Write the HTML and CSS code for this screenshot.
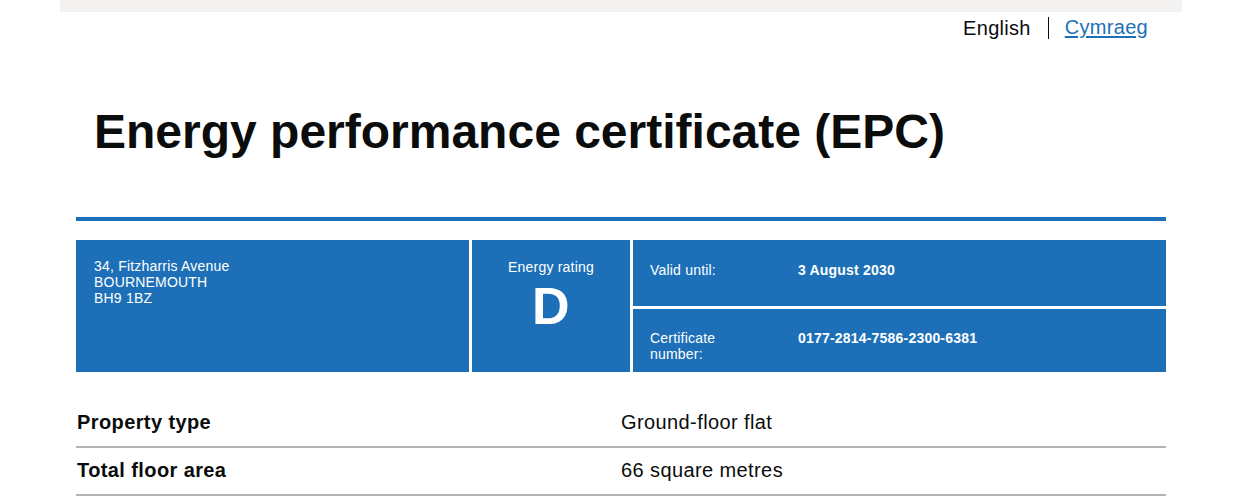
FILE: index.html
```html
<!DOCTYPE html>
<html lang="en">
<head>
<meta charset="UTF-8">
<meta name="viewport" content="width=device-width, initial-scale=1.0">
<title>Energy performance certificate (EPC)</title>
<link rel="stylesheet" href="styles.css">
</head>
<body>
  <div class="topBar"></div>
  <div class="page">
    <div class="langToggle">
      <span class="langCurrent">English</span>
      <a href="#" class="langLink">Cymraeg</a>
    </div>

    <h1 class="pageTitle">Energy performance certificate (EPC)</h1>

    <div class="summary">
      <div class="summaryAddress">
        34, Fitzharris Avenue<br>
        BOURNEMOUTH<br>
        BH9 1BZ
      </div>
      <div class="summaryRating">
        <div class="ratingLabel">Energy rating</div>
        <div class="ratingLetter">D</div>
      </div>
      <div class="summaryMeta">
        <div class="metaRow first">
          <div class="metaLabel">Valid until:</div>
          <div class="metaValue">3 August 2030</div>
        </div>
        <div class="metaRow">
          <div class="metaLabel">Certificate<br>number:</div>
          <div class="metaValue">0177-2814-7586-2300-6381</div>
        </div>
      </div>
    </div>

    <dl class="details">
      <div class="detailRow">
        <dt>Property type</dt>
        <dd>Ground-floor flat</dd>
      </div>
      <div class="detailRow">
        <dt>Total floor area</dt>
        <dd>66 square metres</dd>
      </div>
    </dl>
  </div>
</body>
</html>
```

FILE: styles.css
```css
body {
  margin: 0;
  font-family: "Liberation Sans", Arial, sans-serif;
  color: #0b0c0c;
  background: #fff;
}

/* grey strip across the top */
.topBar {
  height: 12px;
  margin: 0 57px 0 60px;
  background-color: #f3f2f1;
}

.page {
  width: 1090px;
  margin-left: 76px;
}

/* language switch */
.langToggle {
  display: flex;
  justify-content: flex-end;
  align-items: center;
  padding: 3px 18px 0 0;
  font-size: 20px;
  line-height: 25px;
  letter-spacing: 0.3px;
}
.langCurrent {
  padding-right: 17px;
  border-right: 1px solid #0b0c0c;
  line-height: 22px;
}
.langLink {
  margin-left: 16px;
  color: #1d70b8;
  text-decoration: underline;
  text-underline-offset: 2px;
}

.pageTitle {
  margin: 67px 0 0 18px;
  font-size: 48px;
  line-height: 50px;
  font-weight: bold;
}

/* blue summary panel */
.summary {
  display: grid;
  grid-template-columns: 393px 158px 1fr;
  gap: 3px;
  margin-top: 60px;
  padding-top: 19px;
  border-top: 4px solid #1d70b8;
  color: #fff;
  font-size: 14px;
  line-height: 16px;
  letter-spacing: 0.2px;
}
.summaryAddress {
  background-color: #1d70b8;
  padding: 18px;
  height: 132px;
  box-sizing: border-box;
}
.summaryRating {
  background-color: #1d70b8;
  text-align: center;
  padding-top: 19px;
}
.ratingLabel {
  margin-bottom: 3px;
}
.ratingLetter {
  font-size: 52px;
  line-height: 56px;
  font-weight: bold;
}
.summaryMeta {
  display: grid;
  grid-template-rows: 66px 63px;
  gap: 3px;
}
.metaRow {
  display: flex;
  background-color: #1d70b8;
  padding: 21px 17px 0;
}
.metaRow.first {
  padding-top: 22px;
}
.metaLabel {
  width: 148px;
}
.metaValue {
  font-weight: bold;
}

/* summary list below the panel */
.details {
  margin: 28px 0 0;
}
.detailRow {
  display: flex;
  padding: 10px 0 11px;
  border-bottom: 2px solid #b1b4b6;
  font-size: 20px;
  line-height: 25px;
  letter-spacing: 0.4px;
}
.detailRow dt {
  width: 544px;
  padding-left: 1px;
  font-weight: bold;
}
.detailRow dd {
  margin: 0;
}
```
